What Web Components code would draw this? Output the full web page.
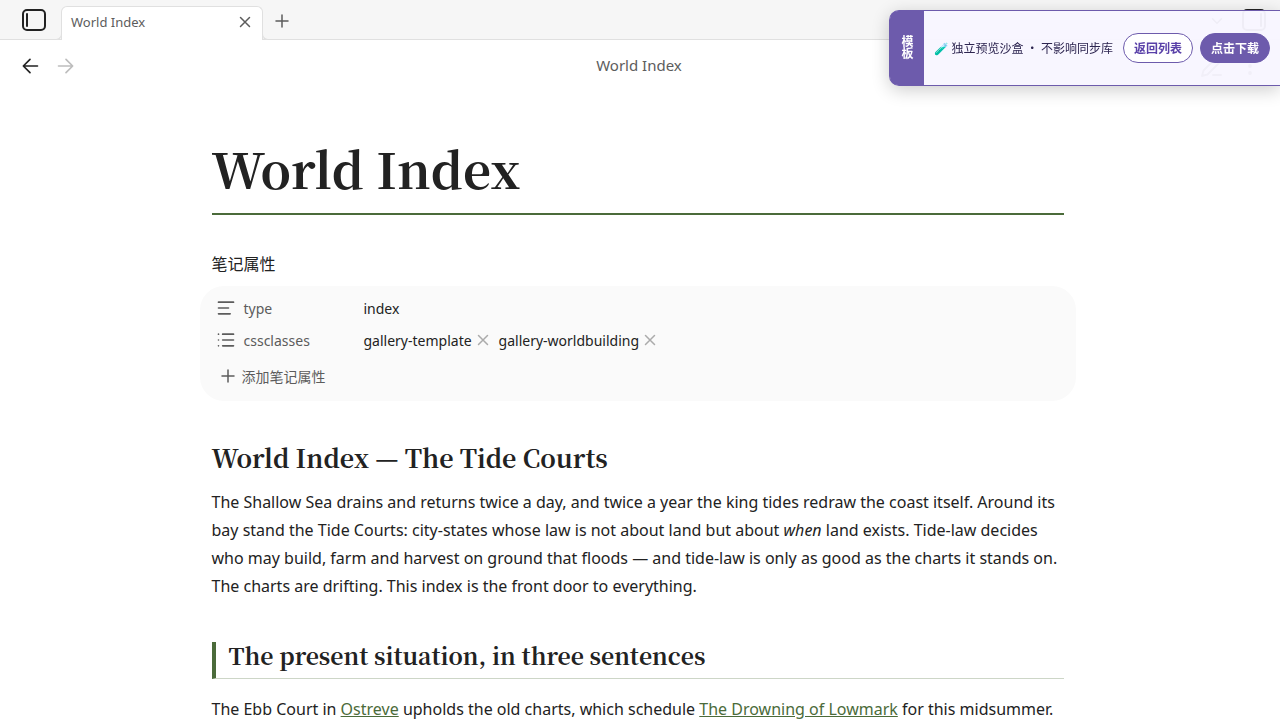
<!DOCTYPE html>
<html lang="en">
<head>
<meta charset="utf-8">
<title>World Index</title>
<style>
  body {
    margin: 0;
    background: #fff;
    color: #222;
    font-family: "Noto Sans", "Noto Sans CJK SC", sans-serif;
    font-size: 16px;
    --muted: #5c5c5c;
    --green: #4b6b3a;
    --purple: #6d5bac;
    --serif: "Noto Serif CJK SC", "Source Serif 4", "Liberation Serif", serif;
  }
</style>
</head>
<body>
<note-app>
  <tab-bar slot="tabs" label="World Index"></tab-bar>
  <view-header slot="header">World Index</view-header>
  <note-title>World Index</note-title>
  <note-properties heading="笔记属性">
    <property-row icon="text" name="type">index</property-row>
    <property-row icon="list" name="cssclasses">
      <property-tag>gallery-template</property-tag>
      <property-tag>gallery-worldbuilding</property-tag>
    </property-row>
  </note-properties>
  <note-heading>World Index — The Tide Courts</note-heading>
  <note-paragraph>The Shallow Sea drains and returns twice a day, and twice a year the king tides redraw the coast itself. Around its bay stand the Tide Courts: city-states whose law is not about land but about <em>when</em> land exists. Tide-law decides who may build, farm and harvest on ground that floods — and tide-law is only as good as the charts it stands on. The charts are drifting. This index is the front door to everything.</note-paragraph>
  <note-section>The present situation, in three sentences</note-section>
  <note-paragraph>The Ebb Court in <note-link>Ostreve</note-link> upholds the old charts, which schedule <note-link>The Drowning of Lowmark</note-link> for this midsummer.</note-paragraph>
</note-app>
<sandbox-banner label="模板">
  🧪 独立预览沙盒 · 不影响同步库
  <pill-button slot="actions">返回列表</pill-button>
  <pill-button slot="actions" primary>点击下载</pill-button>
</sandbox-banner>

<script>
const ICONS = {
  left: '<path d="m12 20-8-8 8-8M21 12H4"/>',
  right: '<path d="M3 12h17M12 4l8 8-8 8"/>',
  close: '<path d="M18 6 6 18M6 6l12 12"/>',
  plus: '<path d="M4 12h16M12 4v16"/>',
  chevron: '<path d="m6 9 6 6 6-6"/>',
  text: '<path d="M21 5H3M15 12H3M17 19H3"/>',
  list: '<path d="M8 5h13M8 12h13M8 19h13M3 5h.01M3 12h.01M3 19h.01"/>',
  pen: '<path d="M13 21h8M17 3a2.8 2.8 0 0 1 4 4L7.500 20.500 2 22l1.500-5.500z"/>',
  more: '<circle cx="12" cy="12" r="1"/><circle cx="12" cy="5" r="1"/><circle cx="12" cy="19" r="1"/>',
  sidebar: '<rect x="1" y="2" width="22" height="20" rx="4"/><path d="M5 6v12"/>',
  sidebarRight: '<rect x="1" y="2" width="22" height="20" rx="4"/><path d="M19 6v12"/>'
};

function define(name, render) {
  customElements.define(name, class extends HTMLElement {
    constructor() {
      super();
      this.attachShadow({ mode: 'open' });
    }
    connectedCallback() {
      this.shadowRoot.innerHTML = render(this);
    }
  });
}

define('ui-icon', el => `
  <style>
    :host { display: inline-flex; }
    svg {
      display: block;
      fill: none;
      stroke: currentColor;
      stroke-width: 2;
      stroke-linecap: round;
      stroke-linejoin: round;
    }
  </style>
  <svg width="${el.getAttribute('size') || 18}" height="${el.getAttribute('size') || 18}" viewBox="0 0 24 24" aria-hidden="true">${ICONS[el.getAttribute('name')]}</svg>
`);

define('icon-button', el => `
  <style>
    :host { display: inline-flex; }
    button {
      display: flex;
      padding: 0;
      border: 0;
      background: none;
      color: inherit;
      cursor: pointer;
    }
  </style>
  <button aria-label="${el.getAttribute('label')}">
    <ui-icon name="${el.getAttribute('icon')}" size="${el.getAttribute('size') || 18}"></ui-icon>
  </button>
`);

define('note-app', () => `
  <style>
    :host {
      display: flex;
      flex-direction: column;
      height: 100vh;
      overflow: hidden;
    }
    main {
      flex: 1;
      min-height: 0;
      overflow: hidden;
      padding: 48px 29px 0 24px;
    }
    article {
      max-width: 852px;
      margin: 0 auto;
    }
  </style>
  <slot name="tabs"></slot>
  <slot name="header"></slot>
  <main><article><slot></slot></article></main>
`);

define('tab-bar', el => `
  <style>
    :host {
      display: flex;
      flex: none;
      align-items: flex-end;
      box-sizing: border-box;
      height: 40px;
      padding: 0 14px 0 22px;
      background: #f6f6f6;
      box-shadow: inset 0 -1px #e0e0e0;
      color: var(--muted);
      font-size: 13px;
    }
    .toggle { color: #222; padding-bottom: 8px; }
    .tab {
      position: relative;
      display: flex;
      align-items: center;
      justify-content: space-between;
      box-sizing: border-box;
      width: 202px;
      height: 34px;
      margin: 0 10px 0 15px;
      padding: 0 8px 3px 9px;
      border: 1px solid #e0e0e0;
      border-bottom: 0;
      border-radius: 6px 6px 0 0;
      background: #fff;
    }
    /* curved feet where the tab meets the bar */
    .tab::before, .tab::after {
      content: "";
      position: absolute;
      bottom: 0;
      width: 6px;
      height: 6px;
      border-bottom: 1px solid #e0e0e0;
      background: #f6f6f6;
    }
    .tab::before { right: 100%; border-right: 1px solid #e0e0e0; border-bottom-right-radius: 6px; }
    .tab::after { left: 100%; border-left: 1px solid #e0e0e0; border-bottom-left-radius: 6px; }
    .add { padding-bottom: 10px; }
    .right { display: flex; align-items: flex-end; gap: 16px; margin-left: auto; color: #222; }
    .right .chevron { padding-bottom: 10px; }
  </style>
  <icon-button class="toggle" icon="sidebar" size="24" label="Toggle left sidebar"></icon-button>
  <div class="tab">
    <span>${el.getAttribute('label')}</span>
    <icon-button icon="close" label="Close tab"></icon-button>
  </div>
  <icon-button class="add" icon="plus" label="New tab"></icon-button>
  <div class="right">
    <icon-button class="chevron" icon="chevron" label="Tab list"></icon-button>
    <icon-button class="toggle" icon="sidebarRight" size="24" label="Toggle right sidebar"></icon-button>
  </div>
`);

define('view-header', () => `
  <style>
    :host {
      display: grid;
      grid-template-columns: 1fr auto 1fr;
      flex: none;
      align-items: center;
      height: 52px;
      padding: 0 18px 0 20px;
      color: var(--muted);
      font-size: 15px;
      line-height: 22px;
    }
    nav { display: flex; gap: 16px; }
    .actions { display: flex; justify-content: flex-end; gap: 14px; }
    .back { color: #222; }
    .forward { color: #bdbdbd; }
    span { padding: 0 4px 2px 0; }
  </style>
  <nav>
    <icon-button class="back" icon="left" size="20" label="Back"></icon-button>
    <icon-button class="forward" icon="right" size="20" label="Forward"></icon-button>
  </nav>
  <span><slot></slot></span>
  <div class="actions">
    <icon-button icon="pen" size="24" label="Edit"></icon-button>
    <icon-button icon="more" size="24" label="More options"></icon-button>
  </div>
`);

define('note-title', () => `
  <style>
    :host { display: block; }
    h1 {
      margin: 0;
      padding-bottom: 16px;
      border-bottom: 2px solid var(--green);
      font: 700 49px/57px var(--serif);
    }
  </style>
  <h1><slot></slot></h1>
`);

define('note-properties', el => `
  <style>
    :host {
      display: block;
      margin: 35px -12px 40px;
    }
    h2 {
      margin: 0 12px 8px;
      font-size: 16px;
      font-weight: 400;
      line-height: 28px;
    }
    .rows {
      display: flex;
      flex-direction: column;
      padding: 6px 16px 9px;
      border-radius: 24px;
      background: #fafafa;
      font-size: 14px;
    }
    button {
      display: flex;
      align-items: center;
      align-self: flex-start;
      gap: 5px;
      height: 32px;
      margin-top: 4px;
      padding: 0 3px;
      border: 0;
      background: none;
      color: var(--muted);
      font: inherit;
    }
  </style>
  <h2>${el.getAttribute('heading')}</h2>
  <div class="rows">
    <slot></slot>
    <button><ui-icon name="plus"></ui-icon>添加笔记属性</button>
  </div>
`);

define('property-row', el => `
  <style>
    :host { display: flex; align-items: center; height: 32px; }
    .name {
      display: flex;
      align-items: center;
      gap: 8px;
      width: 148px;
      color: var(--muted);
    }
    .value { display: flex; gap: 7px; }
  </style>
  <div class="name"><ui-icon name="${el.getAttribute('icon')}" size="20"></ui-icon>${el.getAttribute('name')}</div>
  <div class="value"><slot></slot></div>
`);

define('property-tag', () => `
  <style>
    :host { display: flex; align-items: center; gap: 2px; }
    icon-button { color: #ababab; }
  </style>
  <slot></slot>
  <icon-button icon="close" label="Remove"></icon-button>
`);

define('note-heading', () => `
  <style>
    :host { display: block; }
    h1 { margin: 0 0 15px; font: 700 25px/32px var(--serif); }
  </style>
  <h1><slot></slot></h1>
`);

define('note-section', () => `
  <style>
    :host { display: block; margin: 42px 0 16px; }
    h2 {
      margin: 0;
      padding: 0 0 8px 13px;
      border-left: 4px solid var(--green);
      border-bottom: 1px solid #cdd6c7;
      font: 700 23px/28px var(--serif);
    }
  </style>
  <h2><slot></slot></h2>
`);

define('note-paragraph', () => `
  <style>
    :host { display: block; }
    p { margin: 0; line-height: 28px; }
  </style>
  <p><slot></slot></p>
`);

define('note-link', () => `
  <style>
    :host { display: inline; }
    a { color: var(--green); text-decoration: underline; }
  </style>
  <a href="#"><slot></slot></a>
`);

define('sandbox-banner', el => `
  <style>
    :host {
      position: fixed;
      top: 10px;
      right: 0;
      display: flex;
      box-sizing: border-box;
      height: 76px;
      border: 1px solid var(--purple);
      border-right: 0;
      border-radius: 10px 0 0 10px;
      background: rgba(248, 246, 255, .96);
      box-shadow: 0 4px 18px rgba(0, 0, 0, .2);
      color: #2d2550;
      font: 12px/18px "Noto Sans CJK SC", sans-serif;
    }
    .label {
      display: flex;
      align-items: center;
      justify-content: center;
      width: 34px;
      padding-bottom: 2px;
      border-radius: 8px 0 0 8px;
      background: var(--purple);
      color: #fff;
      font-size: 12px;
      font-weight: 700;
      line-height: 12px;
      writing-mode: vertical-rl;
    }
    .body { display: flex; align-items: center; padding: 0 10px; gap: 10px; }
    .actions { display: flex; gap: 7px; }
  </style>
  <div class="label">${el.getAttribute('label')}</div>
  <div class="body">
    <span><slot></slot></span>
    <div class="actions"><slot name="actions"></slot></div>
  </div>
`);

define('pill-button', () => `
  <style>
    :host { display: block; }
    button {
      height: 30px;
      padding: 0 10px;
      border: 1px solid var(--purple);
      border-radius: 15px;
      background: #fff;
      color: #5940a8;
      font: 700 12px/18px "Noto Sans CJK SC", sans-serif;
      cursor: pointer;
    }
    :host([primary]) button { background: var(--purple); color: #fff; }
  </style>
  <button><slot></slot></button>
`);
</script>
</body>
</html>
